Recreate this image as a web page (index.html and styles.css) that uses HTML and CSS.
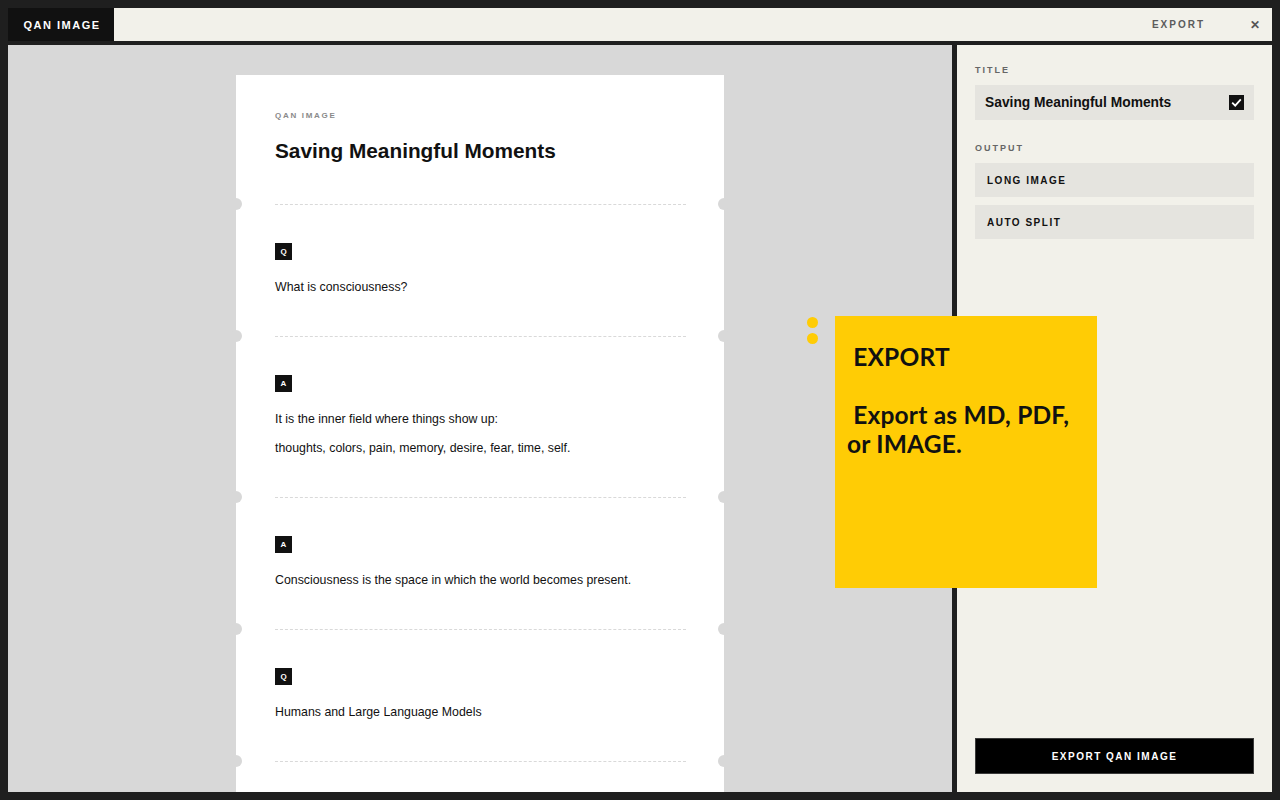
FILE: index.html
```html
<!DOCTYPE html>
<html lang="en">
<head>
  <meta charset="UTF-8">
  <meta name="viewport" content="width=device-width, initial-scale=1.0">
  <title>QAN Image - Export</title>
  <link rel="stylesheet" href="styles.css">
</head>
<body>

  <div class="app">

    <!-- TOP BAR -->
    <header class="topbar">
      <div class="brand">QAN IMAGE</div>
      <div class="topbar-rest">
        <span class="topbar-title">EXPORT</span>
        <button class="btn-close">&#x2715;</button>
      </div>
    </header>

    <!-- MAIN -->
    <main class="main">

      <!-- PREVIEW -->
      <section class="canvas">
        <div class="card">
          <div class="card-head">
            <div class="card-label">QAN IMAGE</div>
            <h1 class="card-title">Saving Meaningful Moments</h1>
          </div>
          <div class="sep"></div>

          <div class="qa">
            <span class="badge">Q</span>
            <p>What is consciousness?</p>
          </div>
          <div class="sep"></div>

          <div class="qa">
            <span class="badge">A</span>
            <p>It is the inner field where things show up:</p>
            <p>thoughts, colors, pain, memory, desire, fear, time, self.</p>
          </div>
          <div class="sep"></div>

          <div class="qa">
            <span class="badge">A</span>
            <p>Consciousness is the space in which the world becomes present.</p>
          </div>
          <div class="sep"></div>

          <div class="qa">
            <span class="badge">Q</span>
            <p>Humans and Large Language Models</p>
          </div>
          <div class="sep"></div>
        </div>
      </section>

      <!-- SETTINGS -->
      <aside class="panel">
        <div class="field-label">TITLE</div>
        <div class="title-input">
          <span>Saving Meaningful Moments</span>
          <svg class="check" width="15" height="15" viewBox="0 0 15 15">
            <rect width="15" height="15" fill="#111"/>
            <path d="M3.2 7.6 L6.2 10.6 L11.8 4.4" fill="none" stroke="#fff" stroke-width="1.8"/>
          </svg>
        </div>

        <div class="field-label output-label">OUTPUT</div>
        <div class="options">
          <button class="option">LONG IMAGE</button>
          <button class="option">AUTO SPLIT</button>
        </div>

        <button class="btn-export">EXPORT QAN IMAGE</button>
      </aside>

      <!-- NOTE -->
      <div class="note-dots"><i></i><i></i></div>
      <div class="note"> EXPORT

 Export as MD, PDF, or IMAGE.</div>

    </main>
  </div>

</body>
</html>
```

FILE: styles.css
```css
/* === BASE === */
* { margin: 0; padding: 0; box-sizing: border-box; }
html, body { height: 100%; }
body {
  background-color: #1f1f1f; color: #111; padding: 8px;
  font-family: "Liberation Sans", Arial, sans-serif; overflow: hidden;
}
button { cursor: pointer; border: none; font-family: inherit; }

.app { display: flex; flex-direction: column; gap: 4px; height: 784px; }

/* === TOP BAR === */
.topbar { display: flex; height: 33px; flex-shrink: 0; }
.brand {
  width: 106px; background-color: #111; color: #fff;
  display: flex; align-items: center; justify-content: center;
  font-size: 11px; font-weight: 700; letter-spacing: 1.5px; padding-left: 2px;
}
.topbar-rest {
  flex: 1; background-color: #f2f1ea;
  display: flex; align-items: center; justify-content: flex-end; padding-right: 10px;
}
.topbar-title { font-size: 10px; font-weight: 700; letter-spacing: 2px; color: #5c5c5c; }
.btn-close {
  background: none; color: #555; font-size: 12px; font-weight: 700;
  margin-left: 43px; width: 14px; height: 14px; line-height: 14px;
}

/* === MAIN === */
.main { flex: 1; display: flex; gap: 5px; position: relative; min-height: 0; }

.canvas {
  flex: 1; background-color: #d8d8d8; overflow: hidden;
  display: flex; justify-content: center; padding-top: 30px;
}

/* === CARD === */
.card { width: 488px; background-color: #fff; padding: 36px 38px 80px 39px; align-self: flex-start; }
.card-label { font-size: 8px; font-weight: 700; letter-spacing: 1.7px; color: #8a8a8a; line-height: 10px; }
.card-title { font-size: 20.8px; font-weight: 700; line-height: 24px; margin-top: 18px; margin-bottom: 41px; color: #111; }

.sep { border-top: 1px dashed #d9d9d9; position: relative; }
.sep::before, .sep::after {
  content: ''; position: absolute; top: -7px; width: 12px; height: 12px;
  border-radius: 50%; background-color: #d8d8d8;
}
.sep::before { left: -45px; }
.sep::after { right: -44px; }

.qa { padding: 38px 0 40px; }
.badge {
  display: flex; align-items: center; justify-content: center;
  width: 17px; height: 17px; background-color: #111; color: #fff;
  font-size: 8px; font-weight: 700; margin-bottom: 18px;
}
.qa p { font-size: 12.35px; line-height: 18px; color: #111; }
.qa p + p { margin-top: 11px; }

/* === PANEL === */
.panel {
  width: 315px; background-color: #f2f1ea; padding: 18px;
  display: flex; flex-direction: column;
}
.field-label { font-size: 9px; font-weight: 700; letter-spacing: 2px; color: #666; line-height: 14px; margin-bottom: 8px; }
.output-label { margin-top: 21px; }
.title-input {
  height: 35px; background-color: #e5e4df; padding: 0 10px;
  display: flex; align-items: center; justify-content: space-between;
  font-size: 13.8px; font-weight: 700; color: #111;
}
.check { display: block; }
.options { display: flex; flex-direction: column; gap: 8px; }
.option {
  height: 34px; background-color: #e5e4df; text-align: left; padding: 0 12px;
  font-size: 10px; font-weight: 700; letter-spacing: 1.5px; color: #111;
}
.btn-export {
  margin-top: auto; height: 36px; background-color: #000; border: 1px solid #3a3a3a;
  color: #fff; font-size: 10px; font-weight: 700; letter-spacing: 1.5px;
}

/* === NOTE (overlay) === */
.note {
  position: absolute; left: 827px; top: 271px; width: 262px; height: 272px;
  background-color: #ffcc05; color: #111; padding: 26px 12px;
  font-family: Lato, "Open Sans", sans-serif; font-weight: 700;
  font-size: 24.5px; line-height: 29px; white-space: pre-wrap; letter-spacing: 0.2px;
}
.note-dots { position: absolute; left: 799px; top: 272px; display: flex; flex-direction: column; gap: 5px; }
.note-dots i { display: block; width: 11px; height: 11px; border-radius: 50%; background-color: #ffcc05; }
```
